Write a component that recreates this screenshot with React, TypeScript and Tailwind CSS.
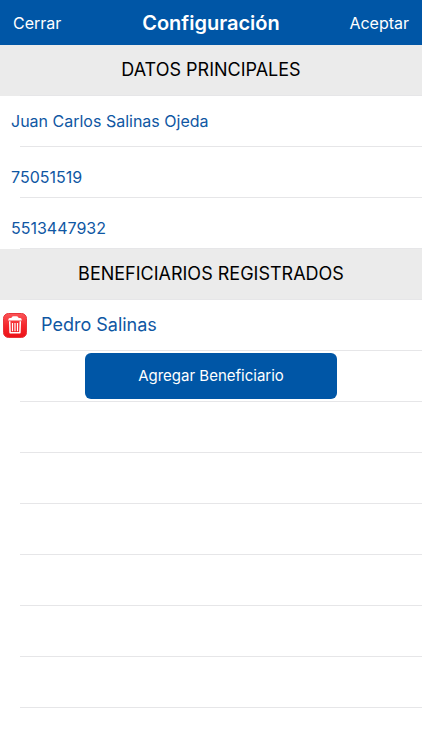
import React from 'react'

const Divider = () => <hr className="ml-5 border-t border-[#e6e6e8]" />

const SectionTitle = ({ children }: { children: React.ReactNode }) => (
  <div className="bg-[#ebebeb]">
    <h2 className="h-[50px] flex items-center justify-center text-lg text-black">
      {children}
    </h2>
    <Divider />
  </div>
)

const TrashIcon = () => (
  <svg viewBox="0 0 24 25" className="w-6 h-[25px]" aria-hidden="true">
    <defs>
      <linearGradient id="trash-bg" x1="0" y1="0" x2="0" y2="1">
        <stop offset="0" stopColor="#fb5558" />
        <stop offset="0.5" stopColor="#f5282d" />
        <stop offset="1" stopColor="#ec1016" />
      </linearGradient>
    </defs>
    <rect x="0.5" y="0.5" width="23" height="24" rx="5" fill="url(#trash-bg)" stroke="#e8343a" />
    <path d="M8.4 5 Q8.6 3.2 10.4 3.2 H13.6 Q15.4 3.2 15.6 5 H17.4 Q18.8 5.2 18.8 7.6 H5.2 Q5.2 5.2 6.6 5 Z" fill="#fff" />
    <path d="M6.7 8.2 L7.1 19.8 H16.9 L17.3 8.2" fill="none" stroke="#fff" strokeWidth="1.5" strokeLinejoin="round" />
    <path d="M9.5 10 V18.2 M12 10 V18.2 M14.5 10 V18.2" stroke="#fff" strokeWidth="1.2" />
  </svg>
)

const App = () => {
  return (
    <main className="min-h-screen bg-white font-['Inter',sans-serif]">
      <header className="h-[45px] px-[13px] grid grid-cols-[1fr_auto_1fr] items-center bg-[#0056a6] text-white">
        <button type="button" className="justify-self-start text-base">Cerrar</button>
        <h1 className="text-xl font-semibold">Configuración</h1>
        <button type="button" className="justify-self-end text-base">Aceptar</button>
      </header>

      <SectionTitle>DATOS PRINCIPALES</SectionTitle>
      <div className="text-base text-[#0f57a3]">
        <input
          aria-label="Nombre"
          defaultValue="Juan Carlos Salinas Ojeda"
          className="block w-full h-[50px] px-[11px] outline-none"
        />
        <Divider />
        <input
          aria-label="Número de cliente"
          defaultValue="75051519"
          className="block w-full h-[50px] px-[11px] pt-2.5 outline-none"
        />
        <Divider />
        <input
          aria-label="Teléfono"
          type="tel"
          defaultValue="5513447932"
          className="block w-full h-[50px] px-[11px] pt-2.5 outline-none"
        />
        <Divider />
      </div>

      <SectionTitle>BENEFICIARIOS REGISTRADOS</SectionTitle>
      <div className="h-[50px] px-[3px] flex items-center gap-3.5 text-lg text-[#0f57a3]">
        <button type="button" aria-label="Eliminar a Pedro Salinas">
          <TrashIcon />
        </button>
        <span>Pedro Salinas</span>
      </div>
      <Divider />
      <div className="h-[50px] flex items-center justify-center">
        <button
          type="button"
          className="w-[252px] h-[46px] rounded-md bg-[#0056a6] text-[15px] text-white"
        >
          Agregar Beneficiario
        </button>
      </div>
      <Divider />
      {[1, 2, 3, 4, 5, 6].map((row) => (
        <div key={row}>
          <div className="h-[50px]" />
          <Divider />
        </div>
      ))}
    </main>
  )
}

export default App
